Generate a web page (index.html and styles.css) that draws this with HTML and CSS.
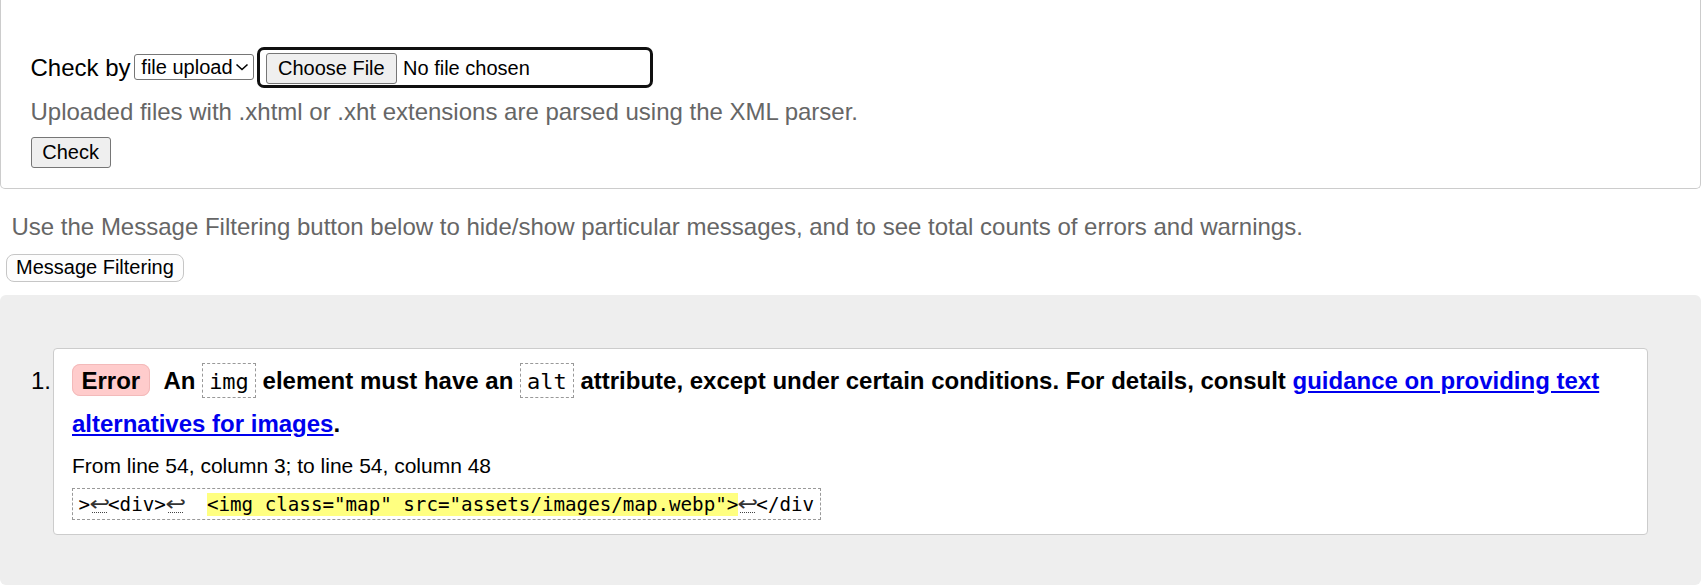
FILE: index.html
```html
<!DOCTYPE html>
<html lang="en">
<head>
<meta charset="utf-8">
<title>Nu Html Checker</title>
<link rel="stylesheet" href="styles.css">
</head>
<body>
<div class="page">
  <div class="formbox">
    <div class="row">
      <label class="label">Check by</label>
      <span class="select">file upload<svg class="chev" width="14" height="8" viewBox="0 0 14 8"><polyline points="1.5,1.5 7,6.5 12.5,1.5" fill="none" stroke="#000" stroke-width="1.6"/></svg></span>
      <span class="filering"><button class="btn choose" type="button">Choose File</button><span class="nofile">No file chosen</span></span>
    </div>
    <p class="details">Uploaded files with .xhtml or .xht extensions are parsed using the XML parser.</p>
    <button class="btn check" type="button">Check</button>
  </div>
  <p class="instruction">Use the Message Filtering button below to hide/show particular messages, and to see total counts of errors and warnings.</p>
  <button class="filterbtn" type="button">Message Filtering</button>
  <ol class="results">
    <li class="error">
      <p class="msg"><strong class="badge">Error</strong> An <code class="ic">img</code> element must have an <code class="ic">alt</code> attribute, except under certain conditions. For details, consult <a href="#">guidance on providing text alternatives for images</a>.</p>
      <p class="location">From line 54, column 3; to line 54, column 48</p>
      <code class="extract">&gt;<span class="lf"><i>↩</i></span>&lt;div&gt;<span class="lf"><i>↩</i></span>  <b class="hl">&lt;img class="map" src="assets/images/map.webp"&gt;</b><span class="lf"><i>↩</i></span>&lt;/div</code>
    </li>
  </ol>
</div>
</body>
</html>
```

FILE: styles.css
```css
* { box-sizing: border-box; }
html, body { margin: 0; padding: 0; background: #fff; }
body {
  font-family: "Liberation Sans", Arial, sans-serif;
  font-size: 24px;
  color: #000;
}
.page { width: 1701px; }

.formbox {
  border: 1px solid #ccc;
  border-top: none;
  border-radius: 0 0 5px 5px;
  padding: 46.7px 0 19.7px 29.5px;
}
.row {
  display: flex;
  align-items: center;
  height: 41.5px;
}
.label { line-height: 27.6px; }
.select {
  display: inline-flex;
  align-items: center;
  justify-content: space-between;
  width: 120px;
  height: 26px;
  margin-left: 3.8px;
  padding: 0 4px 0 6px;
  border: 1px solid #767676;
  border-radius: 3px;
  font-size: 20px;
  line-height: 23px;
  background: #fff;
}
.chev { display: block; }
.filering {
  display: flex;
  align-items: baseline;
  width: 395.4px;
  height: 41.5px;
  margin-left: 3px;
  padding: 3.5px 0 1px 5.5px;
  border: 3px solid #101010;
  border-radius: 7px;
}
.btn {
  font-family: "Liberation Sans", Arial, sans-serif;
  font-size: 20px;
  line-height: 23px;
  color: #000;
  background: #efefef;
  border: 1px solid #767676;
  border-radius: 3px;
  height: 31px;
  padding: 0 10.7px;
}
.choose { padding: 0 11.1px; }
.nofile {
  font-size: 20px;
  line-height: 23px;
  margin-left: 6.3px;
}
.details {
  margin: 9.7px 0 0;
  line-height: 27.6px;
  color: #666;
}
.check {
  display: block;
  margin-top: 11.8px;
}
.instruction {
  margin: 23.9px 0 0;
  padding-left: 11.5px;
  line-height: 27.6px;
  color: #666;
}
.filterbtn {
  display: block;
  margin: 13.5px 0 0 6px;
  height: 28px;
  padding: 0 9px;
  font-family: "Liberation Sans", Arial, sans-serif;
  font-size: 20px;
  line-height: 23px;
  color: #000;
  background: #fdfdfd;
  border: 1px solid #c6c6c6;
  border-radius: 8px;
}
.results {
  margin: 13px 0 0;
  padding: 53px 53px 50px 53px;
  background: #eee;
  border-radius: 6px;
  list-style: decimal outside;
}
.error::marker {
  content: counter(list-item) ".\200A";
}
.error {
  background: #fff;
  border: 1px solid #ccc;
  border-radius: 4px;
  padding: 0 18px;
}
.msg {
  margin: 10.7px 0 0;
  line-height: 42px;
  font-weight: bold;
}
.badge {
  background: #fcc;
  border: 1px solid #f3baba;
  border-radius: 8px;
  padding: 1.5px 8.5px;
  margin-right: 8px;
}
.ic {
  font-family: "DejaVu Sans Mono", monospace;
  font-weight: normal;
  font-size: 22px;
  border: 1px dashed #999;
  padding: 5px 6px 3.5px;
}
.msg a { color: #0000ee; text-decoration: underline; }
.location {
  margin: 9.7px 0 0;
  font-size: 21px;
  line-height: 24px;
}
.extract {
  display: block;
  width: fit-content;
  margin: 9.6px 0 14px;
  padding: 4px 5.5px 3px;
  border: 1px dashed #999;
  font-family: "DejaVu Sans Mono", monospace;
  font-size: 19.2px;
  line-height: 22px;
  white-space: pre;
}
.lf {
  display: inline-block;
  width: 18px;
  background-image: repeating-linear-gradient(to right, #444 0 1px, transparent 1px 2px);
  background-repeat: no-repeat;
  background-size: 16px 1px;
  background-position: 2px 19px;
}
.lf i {
  display: inline-block;
  font-style: normal;
  font-family: "DejaVu Sans", sans-serif;
  font-size: 19px;
  color: #333;
  transform: scale(1.3, 1.1);
  transform-origin: 10% 70%;
}
.hl {
  font-weight: normal;
  background: #ffff80;
}
```
